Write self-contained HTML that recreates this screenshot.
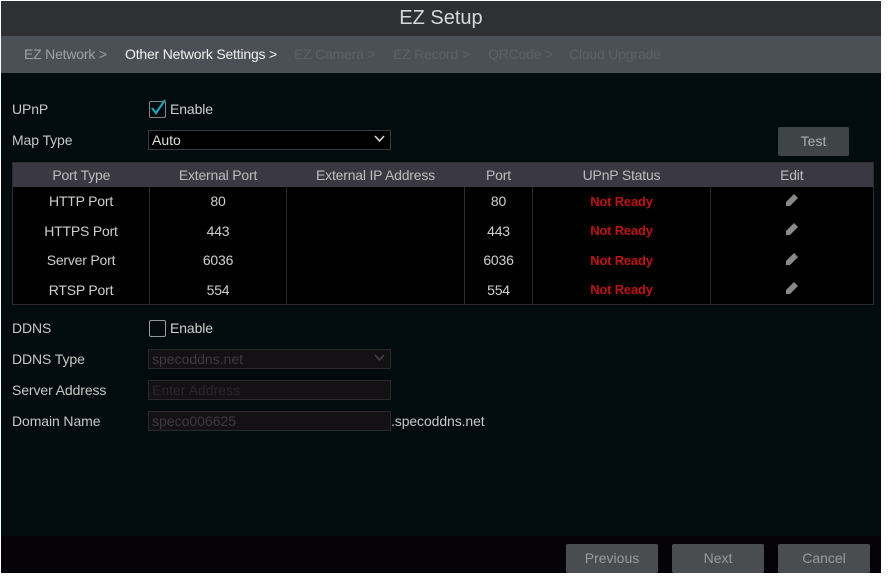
<!DOCTYPE html>
<html><head><meta charset="utf-8"><style>
*{margin:0;padding:0;box-sizing:border-box}
body{width:893px;height:580px;background:#fff;font-family:"Liberation Sans",sans-serif;position:relative;overflow:hidden}
#win{position:absolute;left:1px;top:1px;width:880px;height:572px;background:#020b0d}
.top{position:absolute;left:0;top:0;width:880px;height:35px;background:#2e3033;color:#d8d8d8;font-size:20px;text-align:center;line-height:34px}
.nav{position:absolute;left:0;top:35px;width:880px;height:37px;background:#4b5057;font-size:14px;line-height:37px;color:#5b6168;letter-spacing:-0.2px}
.nav span{position:absolute;top:0}
.lbl{position:absolute;left:11px;color:#c8c8c8;font-size:14px;letter-spacing:-0.1px}
.sel{position:absolute;left:147px;width:243px;height:20px;border:1px solid #3a3a3a;background:#000;color:#ddd;font-size:14px;line-height:18px;padding-left:3px}
.sel.dis{background:#141114;color:#3e3b3e;border-color:#2c292c}
.chev{position:absolute;right:5px;top:4px}
table{position:absolute;left:11px;top:161px;width:862px;border-collapse:collapse;font-size:14px;color:#cfcfcf;text-align:center;border:1px solid #2c2c30;letter-spacing:-0.2px}
th{background:#3a3843;font-weight:normal;height:24px;color:#bdbdbd}
td{height:29.5px;border-left:1px solid #2c2c30;background:#000}
td:first-child{border-left:none}
.red{color:#c01212;font-weight:bold;font-size:13px}
.btn{position:absolute;height:29px;background:#4a4d50;border-radius:2px;color:#9a9a9a;font-size:14px;text-align:center;line-height:29px}
.cb{position:absolute;left:148px;width:17px;height:17px;border:1px solid #888;border-radius:2px}
</style></head><body>
<div id="win">
<div class="top">EZ Setup</div>
<div class="nav"><span style="left:23px;color:#9ca1a7">EZ Network &gt;</span><span style="left:124px;color:#f0f0f0">Other Network Settings &gt;</span><span style="left:293px">EZ Camera &gt;</span><span style="left:392px">EZ Record &gt;</span><span style="left:487px">QRCode &gt;</span><span style="left:568px">Cloud Upgrade</span></div>
<div class="lbl" style="top:100px">UPnP</div>
<div class="cb" style="top:100px"><svg width="17" height="17" viewBox="0 0 17 17" style="position:absolute;left:-1px;top:-3px"><path d="M3 9 L7 14 L16 1" stroke="#19a3b5" stroke-width="2.2" fill="none"/></svg></div>
<div class="lbl" style="top:100px;left:169px;color:#d0d0d0">Enable</div>
<div class="lbl" style="top:131px">Map Type</div>
<div class="sel" style="top:129px">Auto<svg class="chev" width="11" height="8"><path d="M1 1 L5.5 6 L10 1" stroke="#ddd" stroke-width="1.5" fill="none"/></svg></div>
<div class="btn" style="left:777px;top:126px;width:71px;background:#3f4547;color:#a9b0b2">Test</div>
<table>
<tr><th style="width:137px">Port Type</th><th style="width:137px">External Port</th><th style="width:178px">External IP Address</th><th style="width:68px">Port</th><th style="width:178px">UPnP Status</th><th>Edit</th></tr>
<tr><td>HTTP Port</td><td>80</td><td></td><td>80</td><td class="red">Not Ready</td><td><svg width="14" height="14" viewBox="0 0 14 14"><path d="M9 1 L13 5 L5 13 L1 13 L1 9 Z" fill="#8a8a8a"/></svg></td></tr>
<tr><td>HTTPS Port</td><td>443</td><td></td><td>443</td><td class="red">Not Ready</td><td><svg width="14" height="14" viewBox="0 0 14 14"><path d="M9 1 L13 5 L5 13 L1 13 L1 9 Z" fill="#8a8a8a"/></svg></td></tr>
<tr><td>Server Port</td><td>6036</td><td></td><td>6036</td><td class="red">Not Ready</td><td><svg width="14" height="14" viewBox="0 0 14 14"><path d="M9 1 L13 5 L5 13 L1 13 L1 9 Z" fill="#8a8a8a"/></svg></td></tr>
<tr><td>RTSP Port</td><td>554</td><td></td><td>554</td><td class="red">Not Ready</td><td><svg width="14" height="14" viewBox="0 0 14 14"><path d="M9 1 L13 5 L5 13 L1 13 L1 9 Z" fill="#8a8a8a"/></svg></td></tr>
</table>
<div class="lbl" style="top:319px">DDNS</div>
<div class="cb" style="top:319px;border-color:#999"></div>
<div class="lbl" style="top:319px;left:169px;color:#d0d0d0">Enable</div>
<div class="lbl" style="top:350px">DDNS Type</div>
<div class="sel dis" style="top:348px">specoddns.net<svg class="chev" width="11" height="8"><path d="M1 1 L5.5 6 L10 1" stroke="#444" stroke-width="1.5" fill="none"/></svg></div>
<div class="lbl" style="top:381px">Server Address</div>
<div class="sel dis" style="top:379px;color:#2a272a">Enter Address</div>
<div class="lbl" style="top:412px">Domain Name</div>
<div class="sel dis" style="top:410px">speco006625</div>
<div class="lbl" style="top:412px;left:390px">.specoddns.net</div>
<div style="position:absolute;left:0;top:535px;width:880px;height:37px;background:#050308"></div>
<div class="btn" style="left:565px;top:543px;width:92px">Previous</div>
<div class="btn" style="left:671px;top:543px;width:92px">Next</div>
<div class="btn" style="left:777px;top:543px;width:92px">Cancel</div>
</div>
</body></html>
